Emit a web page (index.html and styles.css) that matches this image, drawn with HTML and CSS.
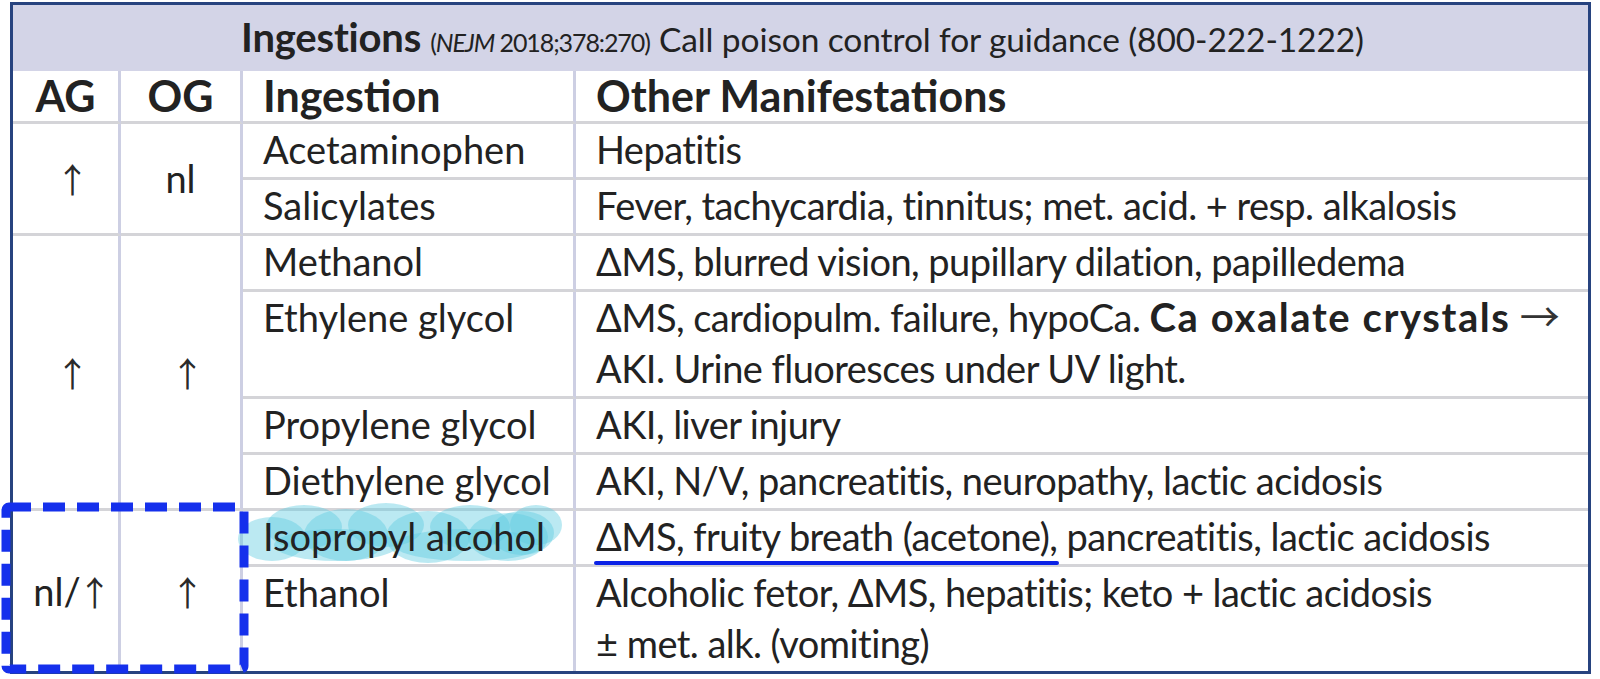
FILE: index.html
```html
<!DOCTYPE html>
<html>
<head>
<meta charset="utf-8">
<link rel="stylesheet" href="styles.css">
</head>
<body>
<div class="page">
  <table class="tbl">
    <colgroup>
      <col class="c-ag">
      <col class="c-og">
      <col class="c-ing">
      <col class="c-oth">
    </colgroup>
    <tr class="band">
      <th colspan="4"><span class="t-main">Ingestions</span> <span class="t-ref">(<i>NEJM</i> 2018;378:270)</span> <span class="t-call">Call poison control for guidance (800-222-1222)</span></th>
    </tr>
    <tr class="head">
      <th class="ctr">AG</th>
      <th class="ctr">OG</th>
      <th class="lft">Ingestion</th>
      <th class="lft last">Other Manifestations</th>
    </tr>
    <tr>
      <td rowspan="2" class="ctr grp"><span class="arr">↑</span></td>
      <td rowspan="2" class="ctr grp">nl</td>
      <td>Acetaminophen</td>
      <td class="last">Hepatitis</td>
    </tr>
    <tr>
      <td>Salicylates</td>
      <td class="last">Fever, tachycardia, tinnitus; met. acid. + resp. alkalosis</td>
    </tr>
    <tr>
      <td rowspan="4" class="ctr grp"><span class="arr">↑</span></td>
      <td rowspan="4" class="ctr grp"><span class="arr">↑</span></td>
      <td>Methanol</td>
      <td class="last"><span class="d">Δ</span>MS, blurred vision, pupillary dilation, papilledema</td>
    </tr>
    <tr>
      <td>Ethylene glycol</td>
      <td class="last"><span class="d">Δ</span>MS, cardiopulm. failure, hypoCa. <b class="em">Ca oxalate crystals</b> <span class="sarr">→</span><br>AKI. Urine fluoresces under UV light.</td>
    </tr>
    <tr>
      <td>Propylene glycol</td>
      <td class="last">AKI, liver injury</td>
    </tr>
    <tr>
      <td>Diethylene glycol</td>
      <td class="last">AKI, N/V, pancreatitis, neuropathy, lactic acidosis</td>
    </tr>
    <tr>
      <td rowspan="2" class="ctr grp bot">nl/<span class="arr tight">↑</span></td>
      <td rowspan="2" class="ctr grp bot"><span class="arr">↑</span></td>
      <td><span class="hl"><svg class="hl-blob" viewBox="0 0 328 66" width="328" height="66" aria-hidden="true">
        <g fill="#5ccadf" fill-opacity="0.42">
          <ellipse cx="36" cy="40" rx="34" ry="22"/>
          <ellipse cx="68" cy="28" rx="38" ry="22"/>
          <ellipse cx="110" cy="36" rx="42" ry="26"/>
          <ellipse cx="150" cy="26" rx="38" ry="22"/>
          <ellipse cx="192" cy="38" rx="42" ry="26"/>
          <ellipse cx="234" cy="28" rx="40" ry="22"/>
          <ellipse cx="272" cy="38" rx="40" ry="24"/>
          <ellipse cx="300" cy="26" rx="26" ry="20"/>
          <ellipse cx="100" cy="46" rx="62" ry="16"/>
          <ellipse cx="232" cy="46" rx="74" ry="16"/>
          <ellipse cx="286" cy="34" rx="32" ry="22"/>
        </g>
      </svg><span class="hl-txt">Isopropyl alcohol</span></span></td>
      <td class="last"><span class="ul"><span class="d">Δ</span>MS, fruity breath (acetone)</span>, pancreatitis, lactic acidosis</td>
    </tr>
    <tr class="lastrow">
      <td>Ethanol</td>
      <td class="last">Alcoholic fetor, <span class="d">Δ</span>MS, hepatitis; keto + lactic acidosis<br><span class="d">±</span> met. alk. (vomiting)</td>
    </tr>
  </table>
  <svg class="dashbox" width="248" height="172" viewBox="0 0 248 172" aria-hidden="true">
    <rect x="5" y="5" width="238" height="162" rx="3" ry="3" fill="none" stroke="#1530ec" stroke-width="9" stroke-dasharray="22 12"/>
  </svg>
</div>
</body>
</html>
```
FILE: styles.css
```css
html, body {
  margin: 0;
  padding: 0;
  background: #ffffff;
}
.page {
  position: relative;
  width: 1600px;
  height: 679px;
  padding: 2px 0 0 10px;
  box-sizing: border-box;
}
.tbl {
  width: 1581px;
  border: 3px solid #27437f;
  border-collapse: separate;
  border-spacing: 0;
  table-layout: fixed;
  font-family: "Lato", "Noto Sans", sans-serif;
  color: #222222;
}
.c-ag { width: 108px; }
.c-og { width: 122px; }
.c-ing { width: 333px; }
.tbl td, .tbl th {
  padding: 0 0 2px 20px;
  font-size: 38px;
  line-height: 51px;
  border-right: 3px solid #cdcfe3;
  border-bottom: 3px solid #d4d4d8;
  text-align: left;
  vertical-align: top;
  white-space: nowrap;
}
.tbl td.last {
  border-right: none;
  letter-spacing: -0.55px;
}
.tbl th.last { border-right: none; }
.tbl .lastrow td, .tbl td.bot { border-bottom: none; }
.band th {
  background: #d3d4e7;
  text-align: center;
  height: 62px;
  padding: 3px 0 0 4px;
  box-sizing: border-box;
  border: none;
  vertical-align: middle;
  line-height: 58px;
}
.t-main {
  font-weight: 700;
  font-size: 40px;
  letter-spacing: -0.2px;
}
.t-ref {
  font-size: 25px;
  font-weight: 400;
  letter-spacing: -1.1px;
}
.t-call {
  font-size: 33.5px;
  font-weight: 400;
  letter-spacing: -0.1px;
}
.head th {
  font-weight: 700;
  font-size: 43px;
  line-height: 50px;
  padding-bottom: 0;
  padding-top: 0;
  height: 49px;
}
.tbl .ctr {
  text-align: center;
  padding-left: 0;
}
.tbl td.grp {
  vertical-align: middle;
  padding-bottom: 0;
}
.d {
  line-height: 0;
}
.em {
  font-size: 40px;
  line-height: 0;
  letter-spacing: 1.6px;
}
.arr {
  font-family: "Noto Sans CJK JP", "DejaVu Sans", sans-serif;
  font-weight: 400;
  font-size: 34px;
  line-height: 0;
  color: #2a2a2a;
  display: inline-block;
  width: 20px;
  overflow: visible;
  text-align: center;
}
.arr.tight {
  margin-left: -3px;
}
.sarr {
  font-family: "Noto Sans CJK JP", "Liberation Sans", sans-serif;
  font-size: 40px;
  line-height: 0;
  color: #333333;
}
.hl {
  position: relative;
  display: inline-block;
}
.hl-blob {
  position: absolute;
  left: -27px;
  top: -12px;
}
.hl-txt {
  position: relative;
}
.ul {
  position: relative;
}
.ul::after {
  content: "";
  position: absolute;
  left: -2px;
  right: -10px;
  bottom: -6px;
  height: 4px;
  border-radius: 3px;
  background: #0b22e6;
}
.dashbox {
  position: absolute;
  left: 1px;
  top: 502px;
}
```
